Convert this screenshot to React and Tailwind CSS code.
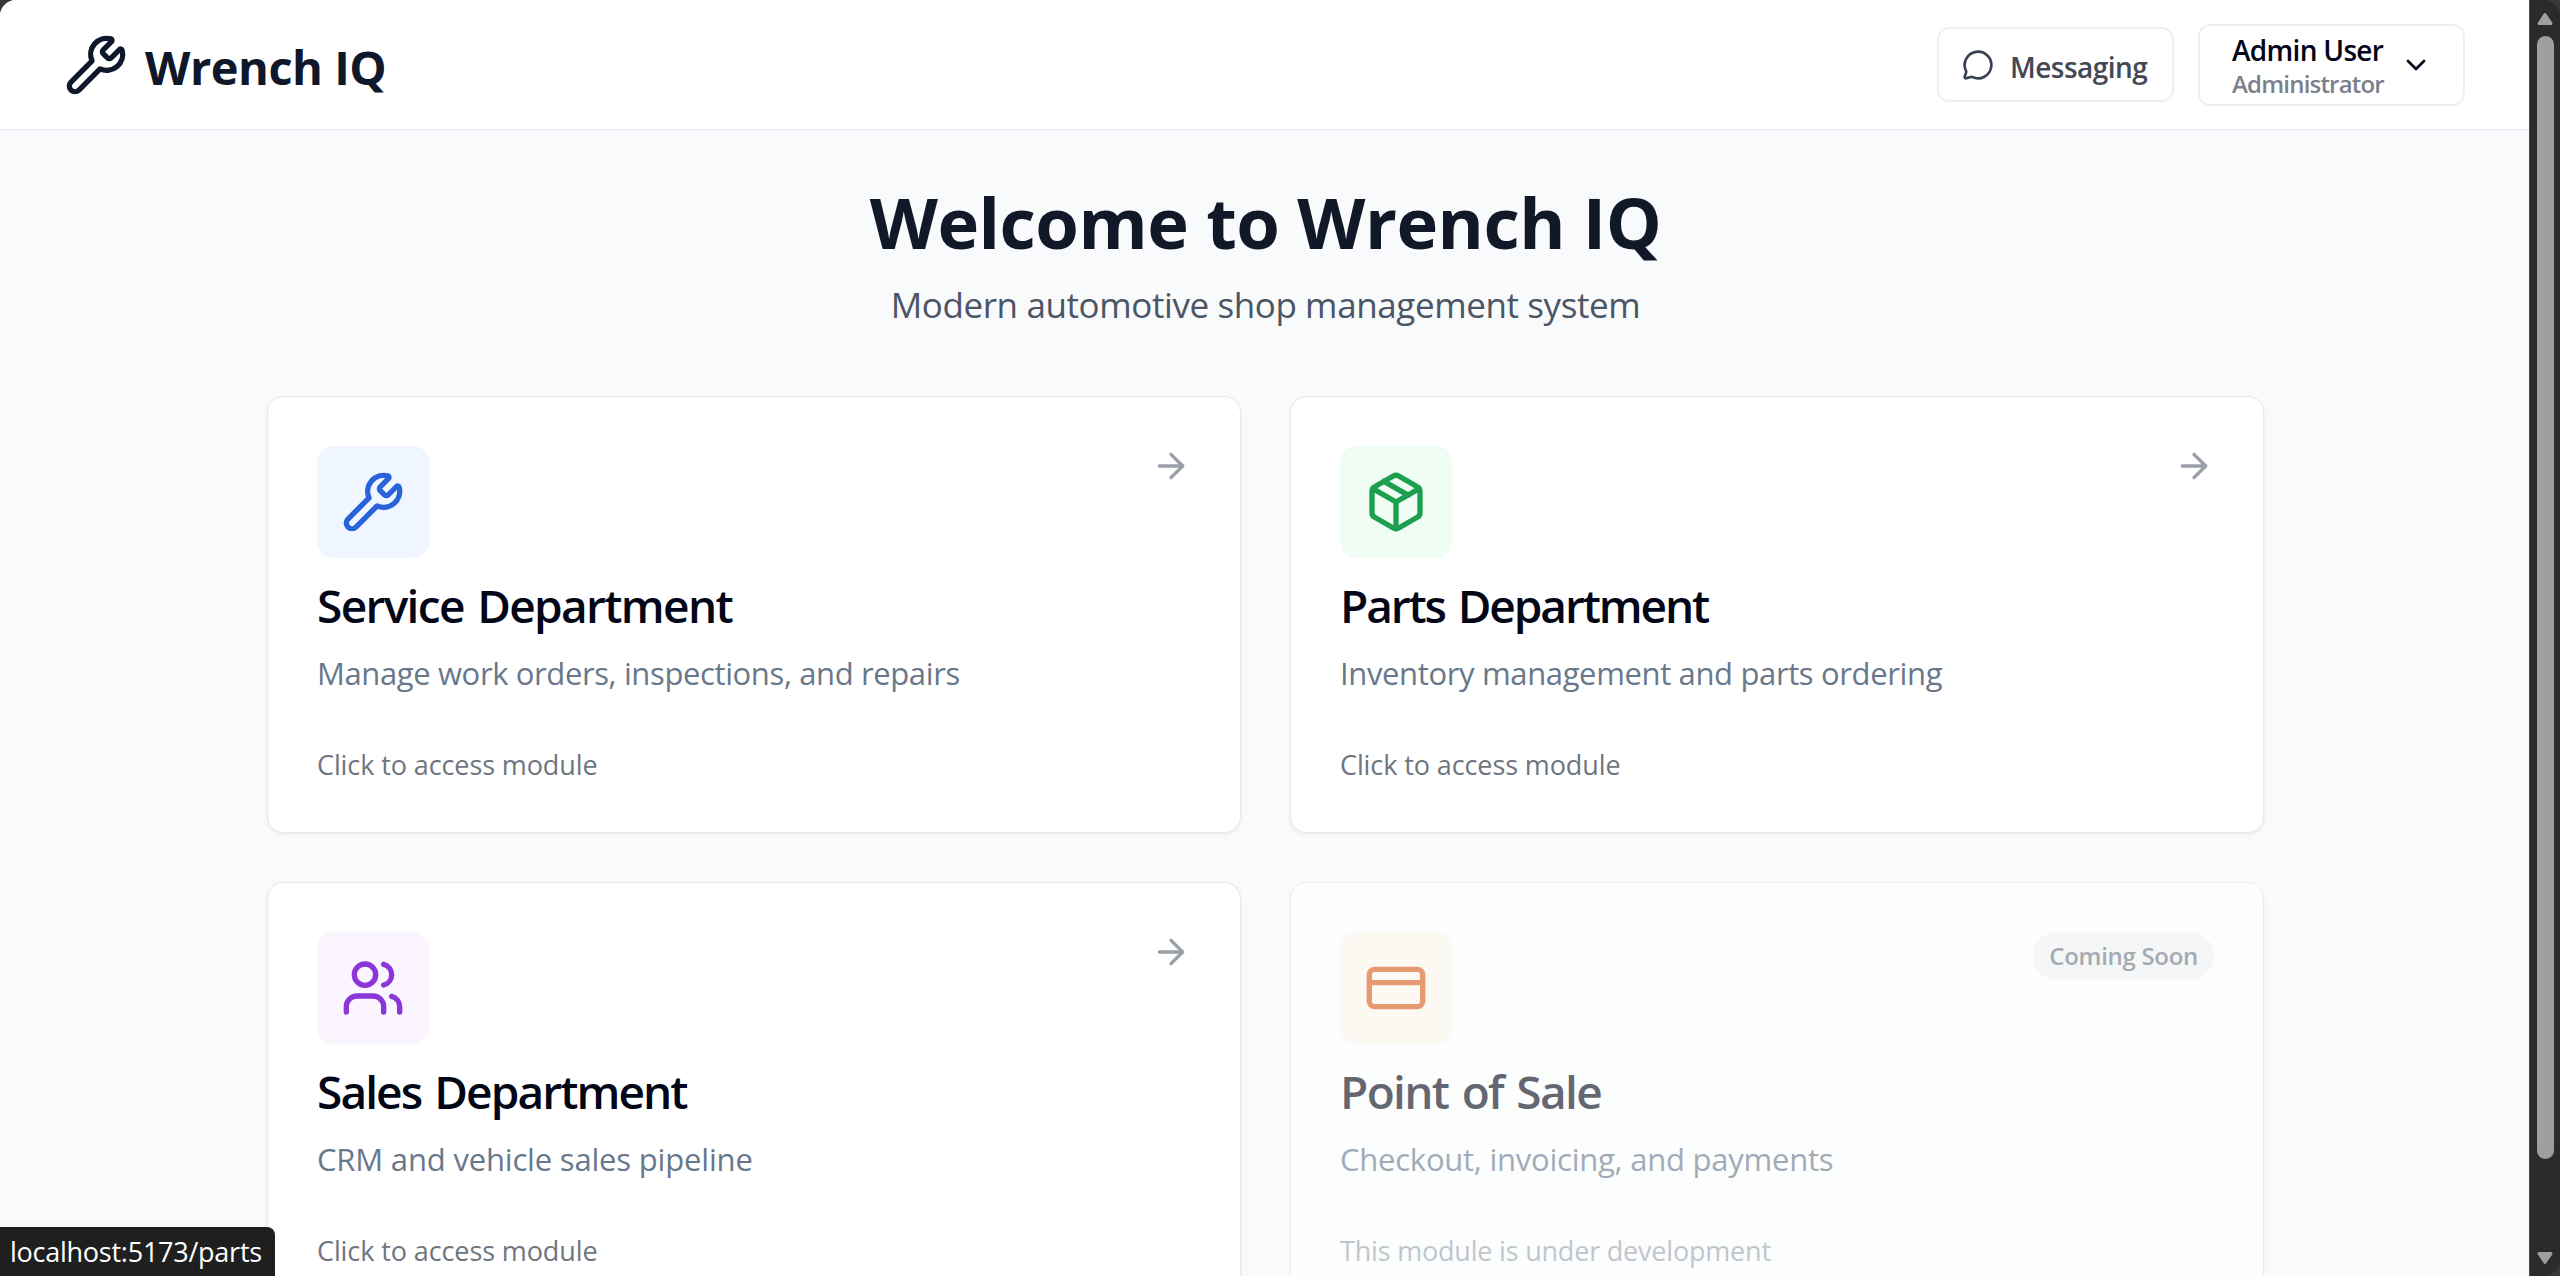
import React from "react";
import {
  ArrowRight,
  ChevronDown,
  CreditCard,
  MessageCircle,
  Package,
  Users,
  Wrench,
} from "lucide-react";

const modules = [
  {
    title: "Service Department",
    titleTracking: "tracking-[-1.65px]",
    description: "Manage work orders, inspections, and repairs",
    descriptionTracking: "tracking-[-0.38px]",
    icon: Wrench,
    tile: "bg-[#eff6ff] text-[#2962db]",
  },
  {
    title: "Parts Department",
    titleTracking: "tracking-[-2.1px]",
    description: "Inventory management and parts ordering",
    descriptionTracking: "tracking-[-0.36px]",
    icon: Package,
    tile: "bg-[#f0fdf4] text-[#1c9f4e]",
  },
  {
    title: "Sales Department",
    titleTracking: "tracking-[-1.9px]",
    description: "CRM and vehicle sales pipeline",
    descriptionTracking: "tracking-[-0.18px]",
    icon: Users,
    tile: "bg-[#faf5ff] text-[#8b36d9]",
  },
  {
    title: "Point of Sale",
    titleTracking: "tracking-[-1.65px]",
    description: "Checkout, invoicing, and payments",
    descriptionTracking: "tracking-[-0.24px]",
    icon: CreditCard,
    tile: "bg-[#fff7ed] text-[#dd5a18]",
    comingSoon: true,
  },
];

function ModuleCard({ module }) {
  const Icon = module.icon;
  return (
    <article
      className={`h-[437px] rounded-2xl border border-[#e4e7eb] bg-white p-[49px] shadow-[0_2px_4px_rgba(0,0,0,0.05)] ${
        module.comingSoon ? "opacity-60" : ""
      }`}
    >
      <div className="flex items-start justify-between">
        <div className={`rounded-2xl p-6 ${module.tile}`}>
          <Icon size={64} strokeWidth={2} />
        </div>
        {module.comingSoon ? (
          <span className="h-12 rounded-full bg-[#f3f4f6] px-4 text-2xl leading-[47px] font-semibold tracking-[-0.3px] text-[#6f757f]">
            Coming Soon
          </span>
        ) : (
          <ArrowRight size={40} className="text-[#9a9ea9]" />
        )}
      </div>
      <h2
        className={`mt-[15px] text-[46px] leading-[64px] font-semibold [word-spacing:3px] whitespace-nowrap text-[#020617] ${module.titleTracking}`}
      >
        {module.title}
      </h2>
      <p
        className={`mt-3 text-[31px] leading-[48px] whitespace-nowrap text-[#68788a] ${module.descriptionTracking}`}
      >
        {module.description}
      </p>
      {module.comingSoon ? (
        <p className="mt-12 text-[27px] leading-10 tracking-[-0.2px] text-[#9ca3af]">
          This module is under development
        </p>
      ) : (
        <p className="mt-12 text-[27px] leading-10 tracking-[-0.1px] text-[#6f757e]">
          Click to access module
        </p>
      )}
    </article>
  );
}

function Header() {
  return (
    <header className="flex h-[130px] shrink-0 items-center justify-between border-b border-[#e2e8f0] bg-white pr-16 pl-16">
      <div className="flex items-center gap-[17px]">
        <Wrench size={64} className="text-[#0f172a]" />
        <span className="pt-1 text-[47px] leading-[60px] font-bold tracking-[-0.5px] text-[#0f172a]">
          Wrench IQ
        </span>
      </div>
      <div className="flex items-center gap-6">
        <button className="flex h-[75px] w-[237px] items-center rounded-xl border-2 border-[#eef0f1] pl-[23px] text-[#374151]">
          <MessageCircle size={32} />
          <span className="ml-4 pt-1 text-[28px] leading-10 font-semibold tracking-[-0.55px] text-[#414955]">
            Messaging
          </span>
        </button>
        <button className="flex h-[82px] w-[267px] items-center rounded-xl border-2 border-[#eef0f1] pl-8 text-left">
          <span className="flex flex-col pt-[3px]">
            <span className="text-[28px] leading-9 font-semibold tracking-[-0.7px] text-[#020617]">
              Admin User
            </span>
            <span className="text-2xl leading-8 font-semibold tracking-[-0.8px] text-[#7b818b]">
              Administrator
            </span>
          </span>
          <ChevronDown size={32} className="ml-4 text-[#020617]" />
        </button>
      </div>
    </header>
  );
}

function Scrollbar() {
  return (
    <div className="flex w-[31px] shrink-0 flex-col items-center rounded-r-2xl border-l border-[#4a4a4a] bg-[#2b2b2b] pt-[13px] pb-3">
      <svg width="16" height="12" viewBox="0 0 16 12" fill="#9f9f9f">
        <path d="M6.8 0.8Q8-.6 9.2.8L15.2 9.6Q16 12 14 12H2Q0 12 .8 9.6Z" />
      </svg>
      <div className="mt-[11px] h-[1123px] w-[17px] rounded-full bg-[#9f9f9f]" />
      <svg width="16" height="12" viewBox="0 0 16 12" fill="#9f9f9f" className="mt-auto">
        <path d="M6.8 11.2Q8 12.6 9.2 11.2L15.2 2.4Q16 0 14 0H2Q0 0 .8 2.4Z" />
      </svg>
    </div>
  );
}

export default function App() {
  return (
    <div className="relative flex h-screen w-full overflow-hidden bg-[#383838] font-['Open_Sans','Noto_Sans',sans-serif]">
      <div className="flex min-w-0 flex-1 flex-col overflow-hidden rounded-tl-2xl bg-[#f8fafc]">
        <Header />
        <main className="ml-[267px] w-[1997px] pt-[52px]">
          <div className="text-center">
            <h1 className="text-[70.5px] leading-[80px] font-bold tracking-[-0.5px] text-[#111827]">
              Welcome to Wrench IQ
            </h1>
            <p className="mt-[15px] text-[35px] leading-[56px] tracking-[-0.4px] text-[#4b5563]">
              Modern automotive shop management system
            </p>
          </div>
          <div className="mt-[63px] grid grid-cols-2 gap-[49px]">
            {modules.map((module) => (
              <ModuleCard key={module.title} module={module} />
            ))}
          </div>
        </main>
      </div>
      <Scrollbar />
      <div className="absolute bottom-0 left-0 h-[49px] w-[275px] rounded-tr-lg bg-[#1f1f1f] pl-[10px] text-[27px] leading-[50px] tracking-[-0.25px] whitespace-nowrap text-white">
        localhost:5173/parts
      </div>
    </div>
  );
}
